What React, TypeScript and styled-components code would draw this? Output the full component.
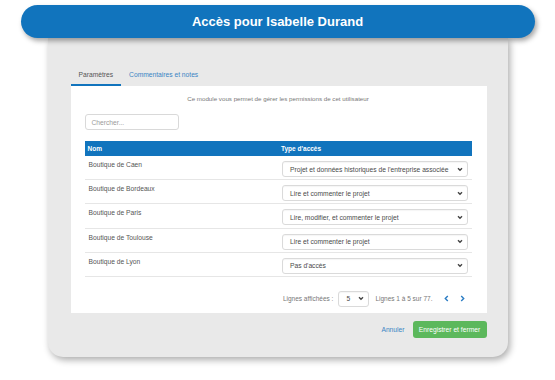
import React from "react";
import styled, { createGlobalStyle } from "styled-components";

const Global = createGlobalStyle`
  html, body { margin: 0; padding: 0; background: #ffffff; }
  body { font-family: "Liberation Sans", Arial, sans-serif; }
  * { box-sizing: border-box; }
`;

const BLUE = "#1174bd";

const Page = styled.div`
  width: 555px;
  height: 380px;
  padding-top: 5px;
  display: flex;
  flex-direction: column;
  align-items: center;
  overflow: hidden;
`;

const TitleBar = styled.header`
  position: relative;
  z-index: 2;
  width: 514px;
  height: 33px;
  border-radius: 17px;
  background: ${BLUE};
  box-shadow: 2px 3px 5px rgba(0, 0, 0, 0.35);
  display: flex;
  align-items: center;
  justify-content: center;
  color: #fff;
  font-weight: 700;
  font-size: 13px;
`;

const Card = styled.section`
  width: 460px;
  height: 319px;
  background: #e9e9e9;
  border-radius: 0 0 15px 15px;
  box-shadow: 2px 3px 7px rgba(0, 0, 0, 0.33);
  padding: 25px 21px 19px 23px;
  display: flex;
  flex-direction: column;
`;

const Tabs = styled.nav`
  display: flex;
`;

const Tab = styled.div<{ $active?: boolean }>`
  padding: 7px 8px 5px;
  font-size: 6.7px;
  line-height: 9px;
  color: ${(p) => (p.$active ? "#555" : "#3a84c4")};
  border-bottom: 2px solid ${(p) => (p.$active ? BLUE : "transparent")};
`;

const Panel = styled.div`
  background: #fff;
  padding: 9px 15px 6px 14px;
  display: flex;
  flex-direction: column;
`;

const Subtitle = styled.p`
  margin: 0;
  font-size: 6.2px;
  line-height: 8px;
  color: #777;
  text-align: center;
`;

const Search = styled.div`
  margin-top: 11px;
  width: 94px;
  height: 16px;
  border: 1px solid #d9d9d9;
  border-radius: 3px;
  font-size: 6.7px;
  color: #9a9a9a;
  display: flex;
  align-items: center;
  padding-left: 6px;
`;

const Table = styled.div`
  margin-top: 11px;
  display: flex;
  flex-direction: column;
`;

const HeadRow = styled.div`
  height: 15px;
  background: ${BLUE};
  display: grid;
  grid-template-columns: 1fr 1fr;
  align-items: center;
  color: #fff;
  font-weight: 700;
  font-size: 6.5px;
`;

const HeadCell = styled.div`
  padding-left: 3px;
`;

const Row = styled.div`
  height: 24.2px;
  display: grid;
  grid-template-columns: 1fr 1fr;
  border-bottom: 1px solid #e6e6e6;
`;

const NameCell = styled.div`
  padding: 5px 4px 0;
  font-size: 6.7px;
  line-height: 8px;
  color: #555;
`;

const SelectCell = styled.div`
  padding: 5px 4px 0;
`;

const SelectBox = styled.div<{ $w?: number }>`
  height: 16px;
  width: ${(p) => (p.$w ? `${p.$w}px` : "100%")};
  border: 1px solid #dadada;
  border-radius: 3px;
  box-shadow: inset 0 1px 1px rgba(0, 0, 0, 0.04);
  display: flex;
  align-items: center;
  justify-content: space-between;
  padding: 0 4px 0 7px;
  font-size: 6.7px;
  color: #4a4a4a;
  background: #fff;
`;

const Pager = styled.div`
  margin-top: 14px;
  height: 16px;
  display: flex;
  align-items: center;
  justify-content: flex-end;
  font-size: 6.5px;
  color: #777;
  padding-right: 1px;
`;

const PagerText = styled.span`
  margin-right: 5px;
`;

const PagerInfo = styled.span`
  margin: 0 6px 0 6px;
`;

const NavButton = styled.span`
  display: inline-flex;
  width: 16px;
  justify-content: center;
`;

const Actions = styled.div`
  margin-top: 8px;
  display: flex;
  justify-content: flex-end;
  align-items: center;
  gap: 8px;
`;

const CancelLink = styled.span`
  font-size: 6.7px;
  color: #3a84c4;
`;

const SaveButton = styled.button`
  height: 17px;
  width: 74px;
  border: none;
  border-radius: 3px;
  background: #5cb85c;
  color: #fff;
  font-family: "Liberation Sans", Arial, sans-serif;
  font-size: 6.7px;
  padding: 0;
`;

const Caret = () => (
  <svg width="6" height="5" viewBox="0 0 6 5">
    <polyline points="1,1.3 3,3.3 5,1.3" fill="none" stroke="#444" strokeWidth="1.4" />
  </svg>
);

const Chev = ({ dir }: { dir: "l" | "r" }) => (
  <svg width="5" height="7" viewBox="0 0 5 7">
    <polyline
      points={dir === "l" ? "3.8,1 1.3,3.5 3.8,6" : "1.2,1 3.7,3.5 1.2,6"}
      fill="none"
      stroke="#2a7cc4"
      strokeWidth="1.4"
    />
  </svg>
);

const rows = [
  ["Boutique de Caen", "Projet et données historiques de l'entreprise associée"],
  ["Boutique de Bordeaux", "Lire et commenter le projet"],
  ["Boutique de Paris", "Lire, modifier, et commenter le projet"],
  ["Boutique de Toulouse", "Lire et commenter le projet"],
  ["Boutique de Lyon", "Pas d'accès"],
];

export default function App() {
  return (
    <>
      <Global />
      <Page>
        <TitleBar>Accès pour Isabelle Durand</TitleBar>
        <Card>
          <Tabs>
            <Tab $active>Paramètres</Tab>
            <Tab>Commentaires et notes</Tab>
          </Tabs>
          <Panel>
            <Subtitle>Ce module vous permet de gérer les permissions de cet utilisateur</Subtitle>
            <Search>Chercher...</Search>
            <Table>
              <HeadRow>
                <HeadCell>Nom</HeadCell>
                <HeadCell>Type d'accès</HeadCell>
              </HeadRow>
              {rows.map(([n, t]) => (
                <Row key={n}>
                  <NameCell>{n}</NameCell>
                  <SelectCell>
                    <SelectBox>
                      <span>{t}</span>
                      <Caret />
                    </SelectBox>
                  </SelectCell>
                </Row>
              ))}
            </Table>
            <Pager>
              <PagerText>Lignes affichées :</PagerText>
              <SelectBox $w={31}>
                <span>5</span>
                <Caret />
              </SelectBox>
              <PagerInfo>Lignes 1 à 5 sur 77.</PagerInfo>
              <NavButton>
                <Chev dir="l" />
              </NavButton>
              <NavButton>
                <Chev dir="r" />
              </NavButton>
            </Pager>
          </Panel>
          <Actions>
            <CancelLink>Annuler</CancelLink>
            <SaveButton>Enregistrer et fermer</SaveButton>
          </Actions>
        </Card>
      </Page>
    </>
  );
}
